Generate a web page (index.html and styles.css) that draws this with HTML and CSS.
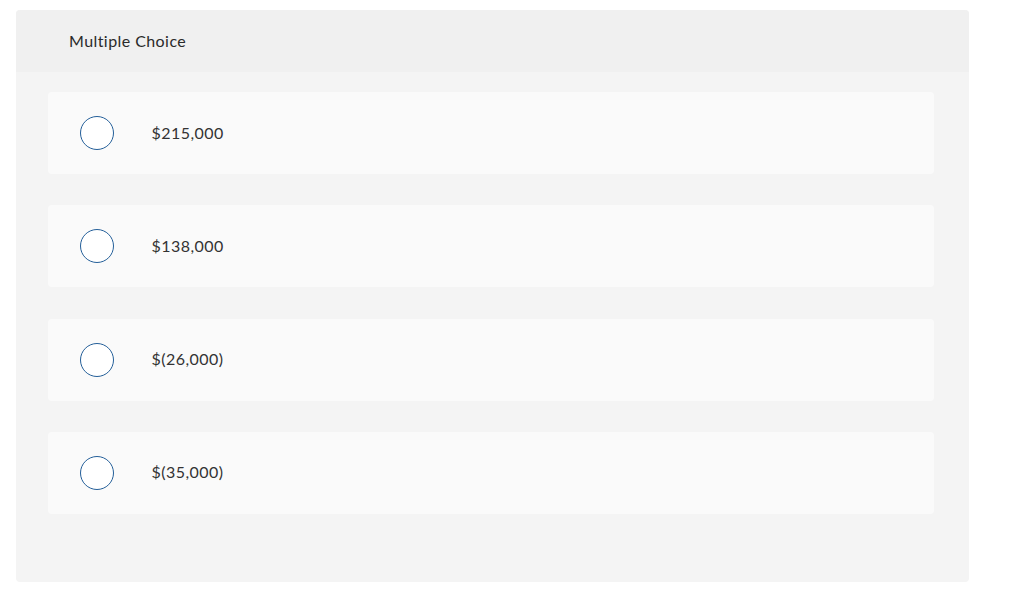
FILE: index.html
```html
<!DOCTYPE html>
<html lang="en">
<head>
<meta charset="utf-8">
<title>Multiple Choice</title>
<link rel="stylesheet" href="styles.css">
</head>
<body>
<div class="card">
  <div class="card-header">Multiple Choice</div>
  <div class="options">
    <label class="option"><span class="radio"></span><span class="label">$215,000</span></label>
    <label class="option"><span class="radio"></span><span class="label">$138,000</span></label>
    <label class="option"><span class="radio"></span><span class="label">$(26,000)</span></label>
    <label class="option"><span class="radio"></span><span class="label">$(35,000)</span></label>
  </div>
</div>
</body>
</html>
```
FILE: styles.css
```css
html, body {
  margin: 0;
  padding: 0;
  background: #ffffff;
}
body {
  padding: 10px 0 0 16px;
  font-family: "Lato", "Open Sans", sans-serif;
}
.card {
  width: 953px;
  height: 572px;
  background: #f4f4f4;
  border-radius: 4px;
  overflow: hidden;
  display: flex;
  flex-direction: column;
}
.card-header {
  height: 62px;
  box-sizing: border-box;
  background: #f0f0f0;
  padding: 21px 0 0 53px;
  font-size: 16px;
  color: #2a2a2a;
  letter-spacing: 0.43px;
}
.options {
  padding: 20px 35px 0 32px;
  display: flex;
  flex-direction: column;
  gap: 31.3px;
}
.option {
  height: 82px;
  background: #fafafa;
  border-radius: 4px;
  display: flex;
  align-items: center;
  padding-left: 31.5px;
}
.radio {
  width: 32px;
  height: 32px;
  border: 1.5px solid #245f99;
  border-radius: 50%;
  background: #ffffff;
  flex: none;
}
.label {
  margin-left: 38px;
  font-size: 16px;
  color: #333333;
  letter-spacing: 0.45px;
  position: relative;
  top: -1px;
}
```
